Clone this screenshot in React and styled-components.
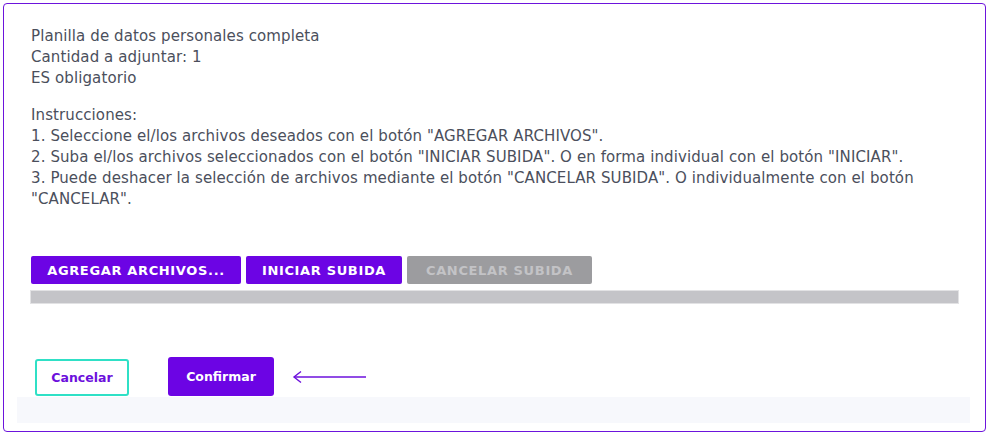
import React from "react";
import styled, { createGlobalStyle } from "styled-components";

const FONT = `"DejaVu Sans", Verdana, sans-serif`;

const Global = createGlobalStyle`
  html, body { margin: 0; padding: 0; background: #ffffff; }
  body { font-family: ${FONT}; }
`;

const Card = styled.div`
  margin: 3px 4px 0 3px;
  height: 429px;
  box-sizing: border-box;
  border: 1px solid #6c14dc;
  border-radius: 4px;
  padding: 22px 15px 0 13px;
  display: flex;
  flex-direction: column;
  background: #fff;
`;

const Content = styled.div`
  padding: 0 12px 0 14px;
  color: #4b4f5c;
  font-size: 15px;
  letter-spacing: 0.1px;
  line-height: 21px;
`;

const Block = styled.div`
  margin-bottom: ${(p) => p.$mb || 0}px;
`;

const Line = styled.div``;

const Toolbar = styled.div`
  display: flex;
  gap: 5px;
  margin-top: 46px;
`;

const UploadButton = styled.button`
  height: 28px;
  width: ${(p) => p.$w}px;
  border: none;
  border-radius: 2px;
  background: ${(p) => (p.$disabled ? "#9c9c9f" : "#6c04e4")};
  color: ${(p) => (p.$disabled ? "#c3c3c6" : "#ffffff")};
  font-family: ${FONT};
  font-weight: 700;
  font-size: 13px;
  letter-spacing: 0.65px;
  padding: 0;
  cursor: pointer;
`;

const Progress = styled.div`
  margin-top: 6px;
  height: 12px;
  background: #c4c4c8;
  border: 1px solid #e2e2e4;
  box-sizing: content-box;
  margin-left: -1px;
  margin-right: -1px;
`;

const Actions = styled.div`
  display: flex;
  align-items: flex-end;
  margin-top: 53px;
  padding-left: 18px;
`;

const OutlineButton = styled.button`
  width: 94px;
  height: 37px;
  box-sizing: border-box;
  border: 2px solid #2fe0c6;
  border-radius: 3px;
  background: #fff;
  color: #6c10dc;
  font-family: ${FONT};
  font-weight: 700;
  font-size: 12.5px;
  padding: 0;
`;

const SolidButton = styled.button`
  width: 106px;
  height: 39px;
  margin-left: 39px;
  border: none;
  border-radius: 3px;
  background: #6c04e4;
  color: #fff;
  font-family: ${FONT};
  font-weight: 700;
  font-size: 12.5px;
  padding: 0;
`;

const ArrowWrap = styled.div`
  align-self: center;
  margin-left: 18px;
  display: flex;
`;

const Footer = styled.div`
  height: 26px;
  background: #f7f8fc;
  margin-top: 1px;
`;

function Arrow() {
  return (
    <svg width="76" height="14" viewBox="0 0 76 14">
      <path d="M2 7 H74" stroke="#6c10dc" strokeWidth="1.4" fill="none" />
      <path d="M9 1.5 L2 7 L9 12.5" stroke="#6c10dc" strokeWidth="1.4" fill="none" strokeLinejoin="miter" />
    </svg>
  );
}

export default function App() {
  return (
    <>
      <Global />
      <Card>
        <Content>
          <Block $mb={16}>
            <Line>Planilla de datos personales completa</Line>
            <Line>Cantidad a adjuntar: 1</Line>
            <Line>ES obligatorio</Line>
          </Block>
          <Block>
            <Line>Instrucciones:</Line>
            <Line>1. Seleccione el/los archivos deseados con el botón "AGREGAR ARCHIVOS".</Line>
            <Line>2. Suba el/los archivos seleccionados con el botón "INICIAR SUBIDA". O en forma individual con el botón "INICIAR".</Line>
            <Line>3. Puede deshacer la selección de archivos mediante el botón "CANCELAR SUBIDA". O individualmente con el botón "CANCELAR".</Line>
          </Block>
          <Toolbar>
            <UploadButton $w={210}>AGREGAR ARCHIVOS...</UploadButton>
            <UploadButton $w={156}>INICIAR SUBIDA</UploadButton>
            <UploadButton $w={185} $disabled>CANCELAR SUBIDA</UploadButton>
          </Toolbar>
          <Progress />
        </Content>
        <Actions>
          <OutlineButton>Cancelar</OutlineButton>
          <SolidButton>Confirmar</SolidButton>
          <ArrowWrap>
            <Arrow />
          </ArrowWrap>
        </Actions>
        <Footer />
      </Card>
    </>
  );
}
